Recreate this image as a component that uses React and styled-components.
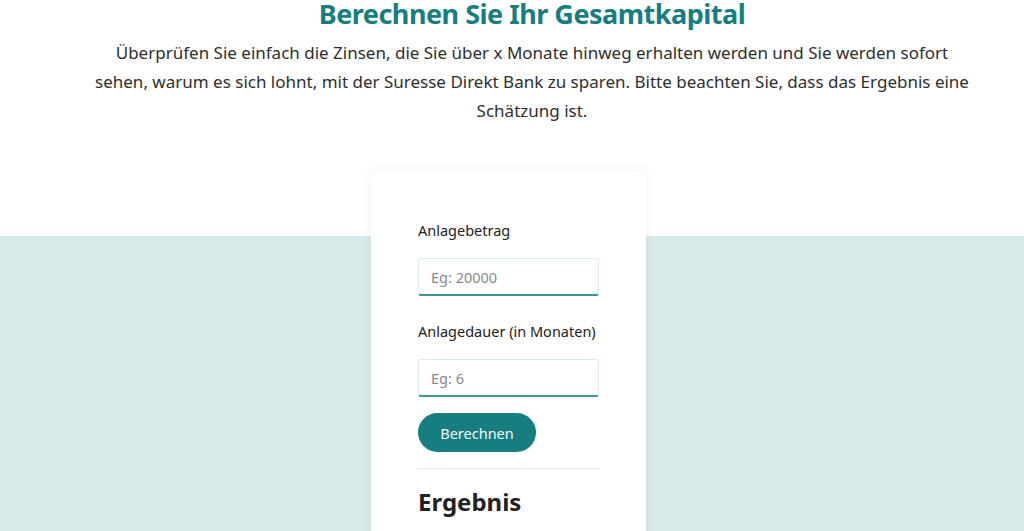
import React from "react";
import styled, { createGlobalStyle } from "styled-components";

const Global = createGlobalStyle`
  html, body { margin: 0; padding: 0; background: #fff; }
  body { font-family: "Noto Sans", "Open Sans", sans-serif; color: #2b2b2b; overflow: hidden; }
  * { box-sizing: border-box; }
`;

const Page = styled.div`
  width: 1024px;
  height: 531px;
  overflow: hidden;
`;

const Hero = styled.header`
  display: flex;
  flex-direction: column;
  align-items: center;
  padding-left: 40px;
  margin-top: -6px;
`;

const Title = styled.h1`
  margin: 0;
  font-size: 27px;
  line-height: 40px;
  font-weight: 700;
  color: #177e80;
  letter-spacing: -0.5px;
`;

const Intro = styled.p`
  margin: 4px 0 0 0;
  width: 880px;
  text-align: center;
  font-size: 17px;
  line-height: 29px;
  color: #2e2e2e;
`;

const Band = styled.section`
  margin-top: 46px;
  display: flex;
  justify-content: center;
  padding-right: 7px;
  background: linear-gradient(#fff 0, #fff 65px, #d9eaea 65px);
  height: 400px;
`;

const Card = styled.div`
  width: 275px;
  background: #fff;
  border-radius: 10px;
  box-shadow: 0 0 14px rgba(0, 0, 0, 0.06);
  padding: 49px 47px 0 47px;
  display: flex;
  flex-direction: column;
`;

const Label = styled.label`
  font-size: 14.5px;
  line-height: 20px;
  color: #222;
  margin-bottom: 18px;
`;

const Input = styled.input`
  width: 181px;
  height: 38px;
  border: 1px solid #d9eef0;
  border-bottom: 2px solid #3a9797;
  border-radius: 3px;
  padding: 0 12px;
  font-family: inherit;
  font-size: 14.5px;
  color: #333;
  outline: none;
  margin-bottom: ${(p) => p.$mb || 0}px;
  &::placeholder { color: #8a8a8a; }
`;

const Button = styled.button`
  align-self: flex-start;
  width: 118px;
  height: 39px;
  border: none;
  border-radius: 20px;
  background: #177e80;
  color: #f3f9f9;
  font-family: inherit;
  font-size: 14.5px;
  margin-top: 16px;
  cursor: pointer;
`;

const Divider = styled.hr`
  width: 182px;
  border: none;
  border-top: 1px solid #e8eeee;
  margin: 16px 0 0 0;
`;

const ResultTitle = styled.h2`
  margin: 16px 0 0 0;
  font-size: 24px;
  line-height: 34px;
  font-weight: 700;
  color: #222;
`;

export default function App() {
  return (
    <Page>
      <Global />
      <Hero>
        <Title>Berechnen Sie Ihr Gesamtkapital</Title>
        <Intro>
          Überprüfen Sie einfach die Zinsen, die Sie über x Monate hinweg erhalten werden und Sie werden sofort
          sehen, warum es sich lohnt, mit der Suresse Direkt Bank zu sparen. Bitte beachten Sie, dass das Ergebnis eine
          Schätzung ist.
        </Intro>
      </Hero>
      <Band>
        <Card>
          <Label>Anlagebetrag</Label>
          <Input placeholder="Eg: 20000" $mb={25} />
          <Label>Anlagedauer (in Monaten)</Label>
          <Input placeholder="Eg: 6" />
          <Button>Berechnen</Button>
          <Divider />
          <ResultTitle>Ergebnis</ResultTitle>
        </Card>
      </Band>
    </Page>
  );
}
